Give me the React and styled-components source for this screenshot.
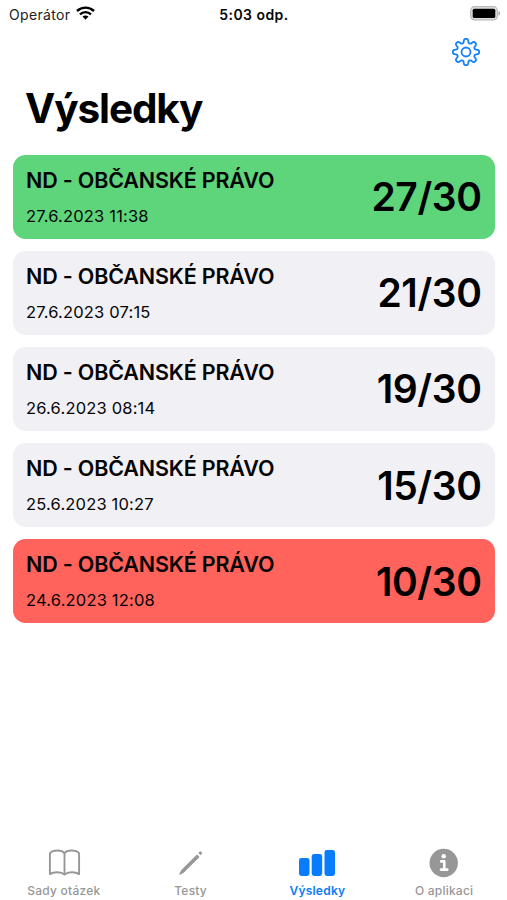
import React from "react";
import styled, { createGlobalStyle } from "styled-components";

const GlobalStyle = createGlobalStyle`
  * { box-sizing: border-box; }
  body { margin: 0; background: #fff; }
`;

const tones = { pass: "#5ed47b", neutral: "#f1f0f5", fail: "#ff635b" };

const Screen = styled.div`
  width: 507px;
  height: 900px;
  display: flex;
  flex-direction: column;
  overflow: hidden;
  background: #fff;
  color: #050505;
  font-family: Inter, "Liberation Sans", sans-serif;
  white-space: nowrap;
`;

const StatusBar = styled.header`
  height: 28px;
  padding: 0 6px 0 9px;
  display: grid;
  grid-template-columns: 1fr auto 1fr;
  align-items: center;
  svg { display: block; }
`;

const Carrier = styled.div`
  display: flex;
  align-items: center;
  gap: 6px;
  font-size: 14px;
  letter-spacing: 0.32px;
  color: #222;
  svg { margin-top: -3px; }
`;

const Clock = styled.time`
  padding-right: 2px;
  font-size: 14px;
  font-weight: 600;
  letter-spacing: 0.45px;
`;

const BatterySlot = styled.div`
  display: flex;
  justify-content: flex-end;
  padding-bottom: 2px;
`;

const Toolbar = styled.nav`
  height: 48px;
  padding-right: 26px;
  display: flex;
  justify-content: flex-end;
  align-items: center;
`;

const IconButton = styled.button`
  padding: 0;
  border: 0;
  background: none;
  color: #1683f8;
  svg { display: block; }
`;

const Title = styled.h1`
  margin: 0;
  height: 79px;
  padding: 8px 25px 0;
  font-size: 40.5px;
  line-height: 50px;
  font-weight: 700;
  letter-spacing: -1.1px;
  color: #000;
`;

const Results = styled.main`
  flex: 1;
  display: flex;
  flex-direction: column;
  gap: 12.6px;
  padding: 0 12.5px 0 13px;
`;

const Card = styled.article`
  height: 83.5px;
  flex: none;
  padding: 0 13px;
  display: flex;
  align-items: center;
  justify-content: space-between;
  border-radius: 12.5px;
  background: ${({ $tone }) => tones[$tone]};
`;

const Details = styled.div`
  display: flex;
  flex-direction: column;
  gap: 12px;
  margin-top: -1.5px;
`;

const Subject = styled.h2`
  margin: 0;
  font-size: 21.5px;
  line-height: 28px;
  font-weight: 600;
  letter-spacing: -0.17px;
`;

const TakenAt = styled.time`
  font-size: 16.5px;
  line-height: 20px;
  letter-spacing: 0.18px;
`;

const Score = styled.strong`
  margin-top: 1px;
  font-size: 39px;
  line-height: 48px;
  font-weight: 600;
  letter-spacing: -0.4px;
  color: #000;
`;

const TabBar = styled.nav`
  height: 60px;
  display: grid;
  grid-template-columns: repeat(4, 1fr);
`;

const Tab = styled.div`
  display: flex;
  flex-direction: column;
  align-items: center;
  padding-left: 1px;
  color: ${({ $active }) => ($active ? "#087cfb" : "#979797")};
  font-size: 12px;
  line-height: 16px;
  font-weight: ${({ $active }) => ($active ? 600 : 500)};
  letter-spacing: 0.22px;
  svg { display: block; margin: 7px 0 4px; }
`;

const gearPath =
  Array.from({ length: 192 }, (_, i) => {
    const a = (i / 192) * Math.PI * 2;
    const r = 11.15 + 2.05 * Math.tanh(1.8 * Math.cos(8 * a) + 0.1);
    return `${i ? "L" : "M"}${(15 + r * Math.sin(a)).toFixed(2)} ${(15 - r * Math.cos(a)).toFixed(2)}`;
  }).join("") + "Z";

const GearIcon = () => (
  <svg width="30" height="30" viewBox="0 0 30 30" fill="none" stroke="currentColor" strokeWidth="1.85" strokeLinejoin="round">
    <path d={gearPath} />
    <circle cx="15" cy="15" r="4.5" />
  </svg>
);

const WifiIcon = () => (
  <svg width="19" height="14" viewBox="0 0 19 14" fill="none" stroke="#000" strokeWidth="2.4">
    <path d="M1 5C5.8.5 13.2.5 18 5" />
    <path d="M4 8.3c3.1-2.9 7.9-2.9 11 0" />
    <path d="M6.5 10.5c1.8-1.5 4.2-1.5 6 0L9.5 13.7Z" fill="#000" stroke="none" />
  </svg>
);

const BatteryIcon = () => (
  <svg width="31" height="15" viewBox="0 0 31 15">
    <rect x="0.7" y="0.7" width="26.6" height="13.2" rx="3.8" fill="#e2e2e2" stroke="#b9b9b9" strokeWidth="1.2" />
    <rect x="2.7" y="2.7" width="22.6" height="9.3" rx="1.6" fill="#000" />
    <path d="M28.5 5c2.2.8 2.2 3.8 0 4.7Z" fill="#aaa" />
  </svg>
);

const BookIcon = () => (
  <svg width="34" height="32" viewBox="0 0 34 32" fill="none" stroke="currentColor" strokeWidth="1.9" strokeLinecap="round" strokeLinejoin="round">
    <path d="M17.500 6.400C15 2.600 6 2.600 2.900 6.300v20.800c3.800-2.600 11.300-2.600 14.600.5 3.300-3.100 10.800-3.100 14.600-.5V6.300C29 2.600 20 2.600 17.500 6.400Zm0 0v21.200" />
  </svg>
);

const PencilIcon = () => (
  <svg width="30" height="32" viewBox="0 0 30 32" fill="currentColor">
    <path d="m5.100 23.300 15.900-15.900 2.600 2.600L7.700 25.700l-3.700 2c-.7.300-.9-.1-.6-.7Z" />
    <path d="m22.300 6 1.200-1.200c1.400-1.200 3.500.7 2.200 2.200l-1.200 1.200Z" />
  </svg>
);

const BarsIcon = () => (
  <svg width="38" height="32" viewBox="0 0 38 32" fill="currentColor">
    <rect x="1" y="11" width="10.500" height="18" rx="2.400" />
    <rect x="13.700" y="7" width="10.500" height="22" rx="2.400" />
    <rect x="26.500" y="3" width="10.500" height="26" rx="2.400" />
  </svg>
);

const InfoIcon = () => (
  <svg width="30" height="32" viewBox="0 0 30 32">
    <circle cx="14.700" cy="16" r="14.200" fill="currentColor" />
    <circle cx="14.700" cy="9.200" r="2.250" fill="#fff" />
    <path d="M12.200 14.400h3.100v8M12 22.600h6.300" fill="none" stroke="#fff" strokeWidth="2.600" strokeLinecap="round" strokeLinejoin="round" />
  </svg>
);

const results = [
  { date: "27.6.2023 11:38", score: "27/30", tone: "pass" },
  { date: "27.6.2023 07:15", score: "21/30", tone: "neutral" },
  { date: "26.6.2023 08:14", score: "19/30", tone: "neutral" },
  { date: "25.6.2023 10:27", score: "15/30", tone: "neutral" },
  { date: "24.6.2023 12:08", score: "10/30", tone: "fail" },
];

const tabs = [
  { label: "Sady otázek", Icon: BookIcon },
  { label: "Testy", Icon: PencilIcon },
  { label: "Výsledky", Icon: BarsIcon, active: true },
  { label: "O aplikaci", Icon: InfoIcon },
];

export default function App() {
  return (
    <Screen>
      <GlobalStyle />
      <StatusBar>
        <Carrier>Operátor <WifiIcon /></Carrier>
        <Clock>5:03 odp.</Clock>
        <BatterySlot><BatteryIcon /></BatterySlot>
      </StatusBar>
      <Toolbar>
        <IconButton aria-label="Nastavení"><GearIcon /></IconButton>
      </Toolbar>
      <Title>Výsledky</Title>
      <Results>
        {results.map(({ date, score, tone }) => (
          <Card key={date} $tone={tone}>
            <Details>
              <Subject>ND - OBČANSKÉ PRÁVO</Subject>
              <TakenAt>{date}</TakenAt>
            </Details>
            <Score>{score}</Score>
          </Card>
        ))}
      </Results>
      <TabBar>
        {tabs.map(({ label, Icon, active }) => (
          <Tab key={label} $active={active}>
            <Icon />
            {label}
          </Tab>
        ))}
      </TabBar>
    </Screen>
  );
}
